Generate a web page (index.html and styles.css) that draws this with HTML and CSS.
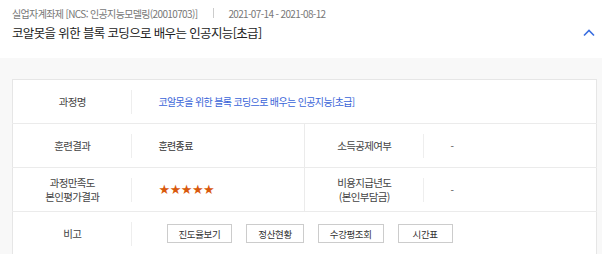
FILE: index.html
```html
<!DOCTYPE html>
<html lang="ko">
<head>
  <meta charset="UTF-8" />
  <meta name="viewport" content="width=device-width, initial-scale=1.0" />
  <title>훈련과정 상세</title>
  <link rel="stylesheet" href="styles.css">
</head>
<body>
  <div class="course-head">
    <div class="meta">
      <span>실업자계좌제 [NCS: 인공지능모델링(20010703)]</span>
      <span class="bar"></span>
      <span>2021-07-14 - 2021-08-12</span>
    </div>
    <div class="title-row">
      <h2 class="title">코알못을 위한 블록 코딩으로 배우는 인공지능[초급]</h2>
      <button class="toggle" aria-label="접기">
        <svg width="12" height="8" viewBox="0 0 12 8"><path d="M1 6.5 L6 1.5 L11 6.5" fill="none" stroke="#3b6fe0" stroke-width="1.6"/></svg>
      </button>
    </div>
  </div>

  <div class="course-body">
    <table class="info">
      <colgroup>
        <col class="c-label" />
        <col class="c-value" />
        <col class="c-label" />
        <col class="c-value" />
      </colgroup>
      <tr>
        <th><span>과정명</span></th>
        <td colspan="3"><a href="#" class="link">코알못을 위한 블록 코딩으로 배우는 인공지능[초급]</a></td>
      </tr>
      <tr>
        <th><span>훈련결과</span></th>
        <td>훈련종료</td>
        <th class="split"><span>소득공제여부</span></th>
        <td class="dash">-</td>
      </tr>
      <tr>
        <th><span>과정만족도<br>본인평가결과</span></th>
        <td><span class="stars">★★★★★</span></td>
        <th class="split"><span>비용지급년도<br>(본인부담금)</span></th>
        <td class="dash">-</td>
      </tr>
      <tr>
        <th><span>비고</span></th>
        <td colspan="3">
          <div class="btns">
            <button class="btn">진도율보기</button>
            <button class="btn">정산현황</button>
            <button class="btn">수강평조회</button>
            <button class="btn">시간표</button>
          </div>
        </td>
      </tr>
    </table>
  </div>
</body>
</html>
```

FILE: styles.css
```css
body {
  margin: 0;
  font-family: "Noto Sans CJK KR", "Noto Sans", sans-serif;
  color: #333;
  background: #fff;
  letter-spacing: -0.04em;
  overflow: hidden;
}
.course-head {
  height: 58px;
  padding: 0 0 0 12px;
  box-sizing: border-box;
}
.meta {
  display: flex;
  align-items: center;
  height: 26px;
  font-size: 10px;
  color: #777;
}
.bar {
  width: 1px;
  height: 10px;
  background: #ccc;
  margin: 0 14px 0 16px;
}
.title-row {
  display: flex;
  align-items: center;
  justify-content: space-between;
}
.title {
  margin: 0;
  font-size: 12.5px;
  font-weight: 400;
  color: #222;
  line-height: 14px;
}
.toggle {
  border: none;
  background: none;
  padding: 0;
  margin-right: 6px;
  width: 14px;
  height: 10px;
  display: flex;
  align-items: center;
  justify-content: center;
}
.course-body {
  background: #f8f8f8;
  padding: 21px 6px 0 12px;
  height: 196px;
}
.info {
  width: 584px;
  border-collapse: collapse;
  table-layout: fixed;
  background: #fff;
  border: 1px solid #e6e6e6;
}
.c-label { width: 119px; }
.c-value { width: 173px; }
.info tr { height: 44px; }
.info tr + tr { border-top: 1px solid #ebebeb; }
.info th {
  position: relative;
  font-weight: 400;
  font-size: 10.5px;
  line-height: 13.5px;
  color: #444;
  text-align: center;
  padding: 0;
}
.info th::after {
  content: "";
  position: absolute;
  right: 0;
  top: 50%;
  margin-top: -12px;
  width: 1px;
  height: 24px;
  background: #eee;
}
.info th.split { border-left: 1px solid #ebebeb; }
.info td {
  font-size: 10px;
  color: #333;
  padding: 0 0 0 27px;
}
.info td.dash { color: #555; }
.link {
  color: #3a64d8;
  text-decoration: none;
}
.stars {
  color: #d9590c;
  font-size: 13px;
  letter-spacing: -0.5px;
  font-family: "DejaVu Sans", sans-serif;
}
.btns {
  display: flex;
  gap: 14px;
  padding-left: 8px;
}
.btn {
  font-family: inherit;
  font-size: 9.5px;
  letter-spacing: -0.04em;
  color: #333;
  background: #fff;
  border: 1px solid #ccc;
  height: 19px;
  min-width: 55px;
  padding: 0 11px;
}
```
